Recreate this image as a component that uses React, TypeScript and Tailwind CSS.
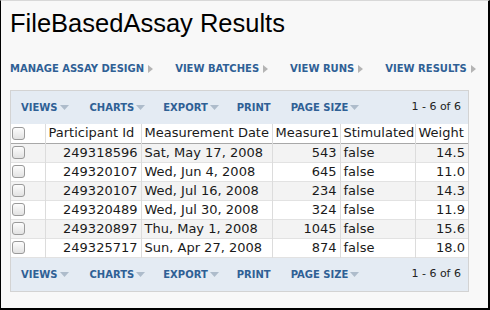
const rows = [
  { id: '249318596', date: 'Sat, May 17, 2008', m: '543', s: 'false', w: '14.5' },
  { id: '249320107', date: 'Wed, Jun 4, 2008', m: '645', s: 'false', w: '11.0' },
  { id: '249320107', date: 'Wed, Jul 16, 2008', m: '234', s: 'false', w: '14.3' },
  { id: '249320489', date: 'Wed, Jul 30, 2008', m: '324', s: 'false', w: '11.9' },
  { id: '249320897', date: 'Thu, May 1, 2008', m: '1045', s: 'false', w: '15.6' },
  { id: '249325717', date: 'Sun, Apr 27, 2008', m: '874', s: 'false', w: '18.0' },
];

function RightArrow() {
  return (
    <svg width="5" height="8" viewBox="0 0 5 8" className="ml-[4px] shrink-0">
      <path d="M0 0 L5 4 L0 8 Z" fill="#b4b4b4" />
    </svg>
  );
}

function DownArrow() {
  return (
    <svg width="9" height="5" viewBox="0 0 9 5" className="ml-[2px] shrink-0">
      <path d="M0 0 L9 0 L4.5 5 Z" fill="#aebccb" />
    </svg>
  );
}

function Checkbox() {
  return (
    <div className="h-[13px] w-[13px] rounded-[3px] border border-[#9a9a9a] bg-gradient-to-b from-[#fdfdfd] to-[#e2e2e2]" />
  );
}

function Toolbar() {
  const item = 'flex shrink-0 items-center whitespace-nowrap text-[10px] font-bold text-[#2f6095]';
  return (
    <div className="flex h-[33px] items-center bg-[#e4ebf3] pl-[10px] pr-[7px]">
      <span className={item}>VIEWS<DownArrow /></span>
      <span className={`${item} ml-[21px]`}>CHARTS<DownArrow /></span>
      <span className={`${item} ml-[18px]`}>EXPORT<DownArrow /></span>
      <span className={`${item} ml-[18px]`}>PRINT</span>
      <span className={`${item} ml-[20px]`}>PAGE SIZE<DownArrow /></span>
      <span className="ml-auto text-[11px] text-[#222]">1 - 6 of 6</span>
    </div>
  );
}

export default function App() {
  const nav = ['MANAGE ASSAY DESIGN', 'VIEW BATCHES', 'VIEW RUNS', 'VIEW RESULTS'];
  const cell = 'border-r border-[#dcdcdc] px-[3px] h-[19px] leading-[18px] whitespace-nowrap';
  return (
    <div
      className="h-[310px] w-[490px] overflow-hidden border-t border-l border-t-[#d8d8d8] border-l-black border-r-2 border-b-2 border-r-black border-b-black bg-[#f8f8f8]"
      style={{ fontFamily: '"DejaVu Sans", Verdana, sans-serif' }}
    >
      <h1
        className="ml-[9px] mt-[8px] text-[25.5px] leading-[28px] text-black"
        style={{ fontFamily: '"Liberation Sans", Arial, sans-serif' }}
      >
        FileBasedAssay Results
      </h1>
      <div className="ml-[9px] mt-[24px] flex items-center">
        {nav.map((n, i) => (
          <span
            key={n}
            className={`flex shrink-0 items-center whitespace-nowrap text-[10px] font-bold text-[#2f6095] ${i > 0 ? 'ml-[22px]' : ''}`}
          >
            {n}
            <RightArrow />
          </span>
        ))}
      </div>
      <div className="ml-[9px] mt-[14px] w-[459px] border border-[#d3d3d3] bg-white">
        <Toolbar />
        <table className="w-[457px] table-fixed border-collapse text-[13px] text-[#1a1a1a]">
          <colgroup>
            <col className="w-[34px]" />
            <col className="w-[96px]" />
            <col className="w-[131px]" />
            <col className="w-[68px]" />
            <col className="w-[75px]" />
            <col className="w-[53px]" />
          </colgroup>
          <thead>
            <tr className="border-b border-[#a8a8a8] bg-white">
              <th className={`${cell} pl-[1px]`}>
                <Checkbox />
              </th>
              <th className={`${cell} text-left font-normal`}>Participant Id</th>
              <th className={`${cell} text-left font-normal`}>Measurement Date</th>
              <th className={`${cell} text-left font-normal`}>Measure1</th>
              <th className={`${cell} text-left font-normal`}>Stimulated</th>
              <th className={`${cell} border-r-0 text-left font-normal`}>Weight</th>
            </tr>
          </thead>
          <tbody>
            {rows.map((r, i) => (
              <tr
                key={i}
                className={`border-b border-[#e2e2e2] ${i % 2 === 0 ? 'bg-[#f3f3f3]' : 'bg-white'}`}
              >
                <td className={`${cell} pl-[1px]`}>
                  <Checkbox />
                </td>
                <td className={`${cell} text-right`}>{r.id}</td>
                <td className={`${cell} text-left`}>{r.date}</td>
                <td className={`${cell} text-right`}>{r.m}</td>
                <td className={`${cell} text-left`}>{r.s}</td>
                <td className={`${cell} border-r-0 text-right`}>{r.w}</td>
              </tr>
            ))}
          </tbody>
        </table>
        <Toolbar />
      </div>
    </div>
  );
}
